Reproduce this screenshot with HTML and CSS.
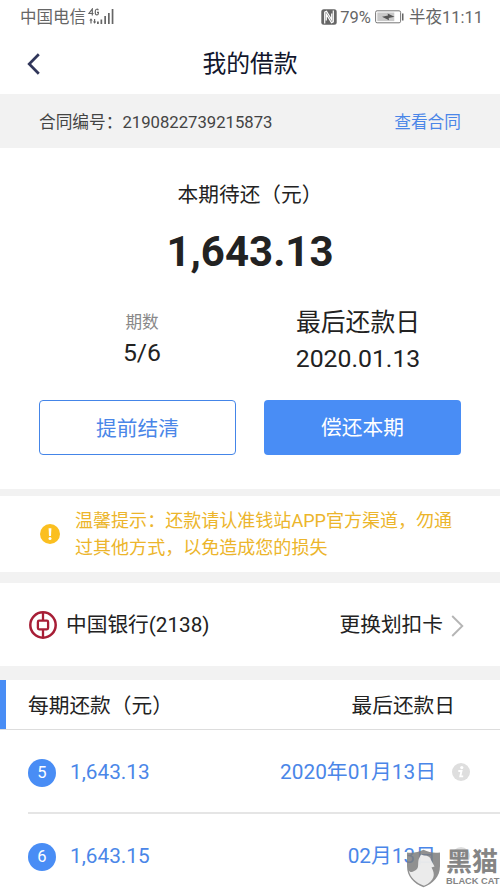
FILE: index.html
```html
<!DOCTYPE html>
<html lang="zh-CN">
<head>
<meta charset="utf-8">
<title>我的借款</title>
<link rel="stylesheet" href="styles.css">
</head>
<body>
<div class="screen">
  <div class="status">
    <span>中国电信</span>
    <svg class="signal" width="27" height="18" viewBox="0 0 27 18" fill="#666">
      <path d="M4.300 7.500V1L1 5.500H5.500M10.300 2.200C9.800.8 7.500.8 7.300 3v2.200c.2 2.300 2.900 2.300 3.100 0V4.400H9" fill="none" stroke="#666" stroke-width="1.200"/>
      <path d="M3 10.200 4.700 12.500H3.600V15.500H2.400V12.500H1.300zM6.600 15.800 4.900 13.500H6V11H7.200V13.500H8.300z"/>
      <path d="M9 13.500h1.800V16H9zM12.500 11.500h1.700V16h-1.700zM16.300 8h1.700v8h-1.700zM20 5h1.700v11H20zM23.700 1h1.700v15h-1.700z"/>
    </svg>
    <span class="status-right">
      <svg class="nfc" width="16" height="16" viewBox="0 0 16 16">
        <rect x=".3" y=".3" width="15.400" height="15.400" rx="2.500" fill="#666"/>
        <path d="M3.700 14.500V3.200L5.500 2.200 10.700 10.800V4.600M12.300 1.500V12.800L10.500 13.800 5.300 5.200V11.400" fill="none" stroke="#fff" stroke-width="1.200"/>
      </svg>
      <span class="percent">79%</span>
      <svg class="battery" width="29" height="14" viewBox="0 0 29 14">
        <rect x=".6" y=".8" width="25" height="12" rx="1.500" fill="#fff" stroke="#777"/>
        <path d="M2.300 2.500h17v8.600h-17z" fill="#c9c9c9"/>
        <path d="M7 6.800 13 5.600 12.600 3.500 19.500 6.800 13.700 8.100 14 10.300z" fill="#555"/>
        <path d="M27 3.500h1.500v7H27z" fill="#666"/>
      </svg>
      <span>半夜11:11</span>
    </span>
  </div>
  <header class="nav">
    <svg class="back" width="14" height="22" viewBox="0 0 14 22"><path d="M11.800 1.200 2.200 11l9.600 9.800" fill="none" stroke="#30365a" stroke-width="2.700"/></svg>
    <h1>我的借款</h1>
  </header>
  <div class="contract"><span>合同编号：2190822739215873</span><a>查看合同</a></div>
  <section class="summary">
    <div class="due-label">本期待还（元）</div>
    <div class="due-amount">1,643.13</div>
    <div class="facts">
      <div class="fact"><div class="term-label">期数</div><div class="term-value">5/6</div></div>
      <div class="fact"><div class="date-label">最后还款日</div><div class="date-value">2020.01.13</div></div>
    </div>
    <div class="buttons">
      <div class="button outline">提前结清</div>
      <div class="button solid">偿还本期</div>
    </div>
  </section>
  <section class="tip">
    <svg width="20" height="20" viewBox="0 0 20 20"><circle cx="10" cy="10" r="10" fill="#fbbf20"/><path d="M8.600 4.300h2.800l-.4 7.700H9z" fill="#fff"/><circle cx="10" cy="14.600" r="1.500" fill="#fff"/></svg>
    <p>温馨提示：还款请认准钱站APP官方渠道，勿通<br>过其他方式，以免造成您的损失</p>
  </section>
  <section class="bank">
    <svg width="28" height="28" viewBox="0 0 28 28" fill="none" stroke="#a71e36"><circle cx="14" cy="14" r="12.700" stroke-width="2.500"/><rect x="8.900" y="9.700" width="10.200" height="8.600" rx="1.200" stroke-width="2.300"/><path d="M14 2v7.500M14 18.500V26" stroke-width="2.300"/></svg>
    <span class="bank-name">中国银行(2138)</span>
    <span class="change">更换划扣卡</span>
    <svg class="chevron" width="13" height="22" viewBox="0 0 13 22"><path d="M1.200 1 11.300 11 1.200 21" fill="none" stroke="#b5b5b5" stroke-width="1.900"/></svg>
  </section>
  <section class="plan">
    <div class="plan-head"><span>每期还款（元）</span><span>最后还款日</span></div>
    <div class="row">
      <span class="badge">5</span><span class="amount">1,643.13</span><span class="date">2020年01月13日</span>
      <svg class="info" width="18" height="18" viewBox="0 0 18 18"><circle cx="9" cy="9" r="9" fill="#dedede"/><circle cx="9.800" cy="4.600" r="1.600" fill="#fff"/><path d="M6.300 8H9.500L8.300 13.400h2.900" fill="none" stroke="#fff" stroke-width="1.900"/></svg>
    </div>
    <div class="row">
      <span class="badge">6</span><span class="amount">1,643.15</span><span class="date">02月13日</span>
      <svg class="info" width="18" height="18" viewBox="0 0 18 18"><circle cx="9" cy="9" r="9" fill="#dedede"/><circle cx="9.800" cy="4.600" r="1.600" fill="#fff"/><path d="M6.300 8H9.500L8.300 13.400h2.900" fill="none" stroke="#fff" stroke-width="1.900"/></svg>
    </div>
  </section>
  <div class="watermark">
    <svg width="35" height="39" viewBox="0 0 35 39">
      <path d="M1 3.500C7 4.500 12 3.300 17.500.8 23 3.300 28 4.500 34 3.500V17C34 28 27 34.500 17.500 38.300 8 34.500 1 28 1 17z" fill="#7d7d7d" fill-opacity=".85"/>
      <path d="M13 9.500 15 5.500 18 6.500C22 6.500 24.500 8 25 11L28.500 17.500 25.500 18.500C29.500 25 29 32 18 36.800 10 33.800 4.500 29 2.800 21.500 5 24.500 8 22.500 11 20 13 18 11.500 13 13 9.500z" fill="#fff" fill-opacity=".82"/>
    </svg>
    <div class="brand"><div class="brand-cn">黑猫</div><div class="brand-en">BLACK CAT</div></div>
  </div>
</div>
</body>
</html>
```
FILE: styles.css
```css
* { box-sizing: border-box; }
body {
  margin: 0;
  background: #fff;
  color: #222;
  font-family: Roboto, "Noto Sans CJK SC", sans-serif;
}
svg { display: block; flex: none; }
.screen { position: relative; width: 500px; height: 888px; overflow: hidden; }

.status {
  display: flex;
  align-items: center;
  height: 34px;
  padding: 0 17px 0 20px;
  color: #666;
  font-size: 16.5px;
  line-height: 34px;
  white-space: nowrap;
}
.status span { padding-top: 1px; }
.status .status-right { padding-top: 0; }
.signal { margin-left: 2px; }
.status-right { display: flex; align-items: center; margin-left: auto; }
.percent { margin: 0 4px 0 3px; }
.battery { margin-right: 5px; }

.nav { display: flex; align-items: center; height: 60px; padding: 0 27px; }
.nav h1 {
  flex: 1;
  margin: 0 14px 0 0;
  color: #11162c;
  font-size: 23.8px;
  font-weight: 400;
  line-height: 60px;
  text-align: center;
}

.contract {
  display: flex;
  justify-content: space-between;
  height: 54px;
  padding: 0 39px;
  background: #f2f2f2;
  color: #444;
  font-size: 16.7px;
  line-height: 58px;
}
.contract a { color: #4a86e8; }

.summary { height: 341px; padding: 32px 39px 0; }
.due-label { height: 30px; font-size: 20.7px; line-height: 30px; text-align: center; }
.due-amount { margin-top: 17px; font-size: 42px; font-weight: 700; line-height: 50px; text-align: center; }
.facts { display: grid; grid-template-columns: 206px 1fr; height: 100px; margin-top: 26px; }
.fact { text-align: center; }
.fact:last-child { padding-left: 10px; }
.term-label { margin-top: 10px; color: #888; font-size: 16.6px; line-height: 20px; }
.term-value { margin-top: 5px; font-size: 24.8px; line-height: 30px; }
.date-label { margin-top: 4px; font-size: 24.8px; line-height: 32px; }
.date-value { margin-top: 5px; font-size: 24.8px; line-height: 30px; }
.buttons { display: grid; grid-template-columns: 197px 197px; justify-content: space-between; margin-top: -3px; }
.button { height: 55px; border-radius: 4px; font-size: 20.7px; line-height: 56px; text-align: center; }
.outline { border: 1px solid #4485e8; color: #4a86e8; }
.solid { background: #498df5; color: #fff; }

.tip {
  display: flex;
  align-items: center;
  height: 94px;
  border-top: 7px solid #f2f2f2;
  border-bottom: 11px solid #f2f2f2;
  padding-left: 40px;
  color: #ecb52b;
}
.tip p { margin: 0 0 0 15px; font-size: 18.05px; line-height: 27px; white-space: nowrap; }

.bank {
  display: flex;
  align-items: center;
  height: 97px;
  border-bottom: 14px solid #f2f2f2;
  padding: 0 36px 0 29px;
  font-size: 20.7px;
  line-height: 30px;
}
.bank-name { margin-left: 9px; }
.change { margin-left: auto; }
.chevron { margin: 3px 0 0 8px; }

.plan-head {
  display: flex;
  justify-content: space-between;
  height: 50px;
  border-bottom: 1px solid #ddd;
  padding: 0 45px 0 28px;
  background: linear-gradient(#498df5, #498df5) left / 6px 100% no-repeat border-box;
  font-size: 20.7px;
  line-height: 52px;
}
.row {
  display: flex;
  align-items: center;
  height: 84px;
  margin-left: 28px;
  border-bottom: 2px solid #e5e5e5;
  padding-right: 30px;
  color: #4a86e8;
  font-size: 20.8px;
  line-height: 30px;
}
.badge {
  width: 28px;
  height: 28px;
  margin-top: 3px;
  border-radius: 50%;
  background: #498df5;
  color: #fff;
  font-size: 16.5px;
  line-height: 28px;
  text-align: center;
}
.amount { margin-left: 14px; padding-top: 2px; }
.date { margin-left: auto; padding-top: 2px; }
.info { margin: 2px 0 0 16px; }

.watermark { position: absolute; left: 406px; top: 849px; display: flex; color: #858585; }
.brand { width: 54px; margin-left: 5px; white-space: nowrap; }
.brand-cn { font-size: 26px; font-weight: 700; line-height: 27px; }
.brand-en { font: 700 9.3px/11px "Liberation Sans", sans-serif; }
```
